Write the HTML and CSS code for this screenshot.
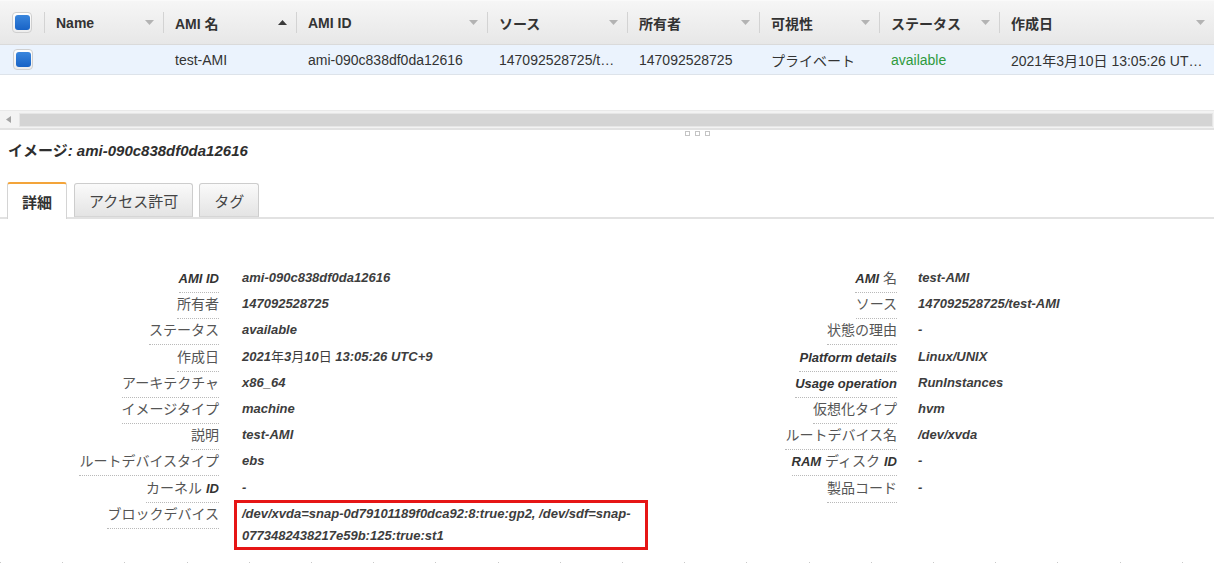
FILE: index.html
```html
<!DOCTYPE html>
<html lang="ja">
<head>
<meta charset="utf-8">
<title>AMI</title>
<link rel="stylesheet" href="styles.css">
</head>
<body>
<div class="table">
  <div class="thead cols">
    <div class="th th-check"><span class="cb"><span class="cb-in"></span></span></div>
    <div class="th"><span>Name</span><svg class="sort" width="9" height="5" viewBox="0 0 9 5"><polygon points="0,0 9,0 4.5,5" fill="#b3b3b3"/></svg></div>
    <div class="th"><span>AMI 名</span><svg class="sort" width="9" height="5" viewBox="0 0 9 5"><polygon points="0,5 9,5 4.5,0" fill="#3a3a3a"/></svg></div>
    <div class="th"><span>AMI ID</span><svg class="sort" width="9" height="5" viewBox="0 0 9 5"><polygon points="0,0 9,0 4.5,5" fill="#b3b3b3"/></svg></div>
    <div class="th"><span>ソース</span><svg class="sort" width="9" height="5" viewBox="0 0 9 5"><polygon points="0,0 9,0 4.5,5" fill="#b3b3b3"/></svg></div>
    <div class="th"><span>所有者</span><svg class="sort" width="9" height="5" viewBox="0 0 9 5"><polygon points="0,0 9,0 4.5,5" fill="#b3b3b3"/></svg></div>
    <div class="th"><span>可視性</span><svg class="sort" width="9" height="5" viewBox="0 0 9 5"><polygon points="0,0 9,0 4.5,5" fill="#b3b3b3"/></svg></div>
    <div class="th"><span>ステータス</span><svg class="sort" width="9" height="5" viewBox="0 0 9 5"><polygon points="0,0 9,0 4.5,5" fill="#b3b3b3"/></svg></div>
    <div class="th"><span>作成日</span><svg class="sort" width="9" height="5" viewBox="0 0 9 5"><polygon points="0,0 9,0 4.5,5" fill="#b3b3b3"/></svg></div>
  </div>
  <div class="trow cols">
    <div class="td td-check"><span class="cb"><span class="cb-in"></span></span></div>
    <div class="td"></div>
    <div class="td">test-AMI</div>
    <div class="td">ami-090c838df0da12616</div>
    <div class="td">147092528725/test-AMI</div>
    <div class="td">147092528725</div>
    <div class="td">プライベート</div>
    <div class="td status-ok">available</div>
    <div class="td">2021年3月10日 13:05:26 UTC+9</div>
  </div>
</div>

<div class="hscroll">
  <svg class="hs-arrow" width="5" height="7" viewBox="0 0 5 7"><polygon points="5,0 5,7 0,3.5" fill="#a3a3a3"/></svg>
  <div class="hs-thumb"></div>
</div>

<div class="splitter"><span></span><span></span><span></span></div>

<h1 class="title">イメージ<em>: ami-090c838df0da12616</em></h1>

<div class="tabs">
  <div class="tab tab-active">詳細</div>
  <div class="tab">アクセス許可</div>
  <div class="tab">タグ</div>
</div>

<div class="details">
  <div class="dcol dcol-left">
    <div class="dl"><span class="lab"><i>AMI ID</i></span></div>
    <div class="dv">ami-090c838df0da12616</div>
    <div class="dl"><span class="lab">所有者</span></div>
    <div class="dv">147092528725</div>
    <div class="dl"><span class="lab">ステータス</span></div>
    <div class="dv">available</div>
    <div class="dl"><span class="lab">作成日</span></div>
    <div class="dv">2021<span class="jp">年</span>3<span class="jp">月</span>10<span class="jp">日</span> 13:05:26 UTC+9</div>
    <div class="dl"><span class="lab">アーキテクチャ</span></div>
    <div class="dv">x86_64</div>
    <div class="dl"><span class="lab">イメージタイプ</span></div>
    <div class="dv">machine</div>
    <div class="dl"><span class="lab">説明</span></div>
    <div class="dv">test-AMI</div>
    <div class="dl"><span class="lab">ルートデバイスタイプ</span></div>
    <div class="dv">ebs</div>
    <div class="dl"><span class="lab">カーネル <i>ID</i></span></div>
    <div class="dv">-</div>
    <div class="dl"><span class="lab">ブロックデバイス</span></div>
    <div class="dv dv-boxed">/dev/xvda=snap-0d79101189f0dca92:8:true:gp2, /dev/sdf=snap-<wbr>0773482438217e59b:125:true:st1</div>
  </div>
  <div class="dcol dcol-right">
    <div class="dl"><span class="lab"><i>AMI</i> 名</span></div>
    <div class="dv">test-AMI</div>
    <div class="dl"><span class="lab">ソース</span></div>
    <div class="dv">147092528725/test-AMI</div>
    <div class="dl"><span class="lab">状態の理由</span></div>
    <div class="dv">-</div>
    <div class="dl"><span class="lab"><i>Platform details</i></span></div>
    <div class="dv">Linux/UNIX</div>
    <div class="dl"><span class="lab"><i>Usage operation</i></span></div>
    <div class="dv">RunInstances</div>
    <div class="dl"><span class="lab">仮想化タイプ</span></div>
    <div class="dv">hvm</div>
    <div class="dl"><span class="lab">ルートデバイス名</span></div>
    <div class="dv">/dev/xvda</div>
    <div class="dl"><span class="lab"><i>RAM</i> ディスク <i>ID</i></span></div>
    <div class="dv">-</div>
    <div class="dl"><span class="lab">製品コード</span></div>
    <div class="dv">-</div>
  </div>
</div>

<div class="ticks"></div>
</body>
</html>
```

FILE: styles.css
```css
* { box-sizing: border-box; }

html, body {
  margin: 0;
  padding: 0;
  background: #fff;
  overflow: hidden;
}

body {
  font-family: "Liberation Sans", "Noto Sans CJK JP", sans-serif;
  font-size: 14px;
  color: #333;
}

/* ---------- table ---------- */
.cols {
  display: grid;
  grid-template-columns: 44px 119px 133px 191px 140px 132px 120px 120px 1fr;
}

.thead {
  height: 45px;
  align-items: center;
  background: linear-gradient(#f6f6f6, #e7e7e7);
  border-top: 1px solid #fafafa;
  border-bottom: 1px solid #dadada;
}

.th {
  height: 21px;
  display: flex;
  align-items: center;
  justify-content: space-between;
  padding: 0 9px 0 11px;
  border-left: 1px solid #d3d3d3;
  font-weight: bold;
  font-size: 14px;
  color: #333;
  white-space: nowrap;
}

.th-check,
.td-check {
  border-left: none;
  padding: 0;
  justify-content: center;
  display: flex;
  align-items: center;
}

.sort { flex: none; }

.trow {
  height: 30px;
  align-items: center;
  background: #ebf3fd;
  border-bottom: 1px solid #dde3ea;
}

.td {
  padding: 0 10px 0 12px;
  white-space: nowrap;
  overflow: hidden;
  text-overflow: ellipsis;
  font-size: 14px;
  color: #333;
}

.status-ok { color: #2f9a3e; }

.cb {
  display: inline-flex;
  align-items: center;
  justify-content: center;
  width: 20px;
  height: 21px;
  border: 1px solid #cfcfcf;
  border-radius: 4px;
  background: linear-gradient(#ffffff, #ededed);
}

.cb-in {
  width: 15px;
  height: 15px;
  border-radius: 3px;
  background: linear-gradient(#3a86dd, #1863c6);
}

/* ---------- horizontal scrollbar ---------- */
.hscroll {
  margin-top: 35px;
  height: 20px;
  display: flex;
  align-items: center;
  background: #f3f3f3;
  border-top: 1px solid #e9e9e9;
  border-bottom: 2px solid #e2e2e2;
  padding: 0 1px 0 6px;
}

.hs-arrow { flex: none; }

.hs-thumb {
  flex: 1;
  height: 14px;
  margin-left: 8px;
  background: #d4d4d4;
  border: 1px solid #e6e6e6;
}

/* ---------- splitter ---------- */
.splitter {
  display: flex;
  gap: 5px;
  padding-left: 685px;
  margin-top: 1px;
  height: 5px;
}

.splitter span {
  width: 5px;
  height: 5px;
  border: 1px solid #c4c4c4;
}

/* ---------- title ---------- */
.title {
  margin: 5px 0 0 8px;
  font-size: 15px;
  line-height: 20px;
  font-weight: bold;
  color: #2e2e2e;
}

.title em {
  font-style: italic;
}

/* ---------- tabs ---------- */
.tabs {
  margin-top: 21px;
  display: flex;
  align-items: flex-end;
  gap: 6px;
  padding-left: 7px;
  border-bottom: 2px solid #e2e2e2;
}

.tab {
  height: 34px;
  padding: 0 14px;
  display: flex;
  align-items: center;
  font-size: 15px;
  color: #444;
  border: 1px solid #cdcdcd;
  border-bottom-color: #d6d6d6;
  border-radius: 3px 3px 0 0;
  background: linear-gradient(#fafafa, #e4e4e4);
}

.tab-active {
  height: 37px;
  margin-bottom: -2px;
  margin-right: 1px;
  background: #fff;
  border-color: #d4d4d4;
  border-top: 2px solid #f3a43a;
  border-bottom: none;
  font-weight: bold;
  color: #333;
}

/* ---------- details ---------- */
.details {
  display: flex;
  margin-top: 48px;
}

.dcol {
  display: grid;
  grid-template-columns: 219px 1fr;
  column-gap: 23px;
  row-gap: 0.2px;
  align-content: start;
}

.dcol-left { width: 678px; }

.dcol-right {
  flex: 1;
  column-gap: 21px;
}

.dl { text-align: right; }

.lab {
  display: inline-block;
  height: 26px;
  line-height: 22px;
  padding-bottom: 3px;
  border-bottom: 1px dotted #b9b9b9;
  font-size: 14px;
  color: #555;
  white-space: nowrap;
}

.lab i {
  font-style: italic;
  font-weight: bold;
  font-size: 13px;
  color: #333;
}

.dv {
  font-style: italic;
  font-weight: bold;
  font-size: 13px;
  line-height: 22px;
  color: #3d3d3d;
}

.dv .jp {
  font-style: normal;
  font-weight: normal;
}

.dv-boxed {
  width: 414px;
  margin: -3px 0 0 -8px;
  padding: 0 3px 0 5px;
  border: 3px solid #e61515;
}

/* ---------- bottom dotted edge ---------- */
.ticks {
  height: 1px;
  margin-top: 12px;
  background: repeating-linear-gradient(90deg, #c9c9c9 0 1px, transparent 1px 62.2px);
}
```
